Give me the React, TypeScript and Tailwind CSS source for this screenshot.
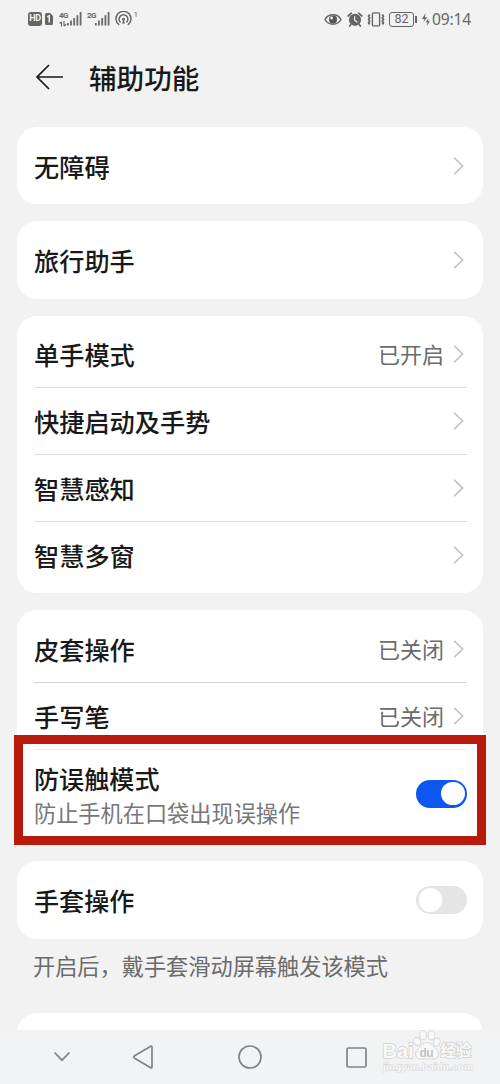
import type { ReactNode } from 'react';
import clsx from 'clsx';

function SignalBars() {
  return (
    <svg width="15" height="14" viewBox="0 0 15 14" fill="#6b6b6b">
      <rect x="0" y="11" width="1.8" height="2.5" />
      <rect x="3.1" y="8.5" width="1.8" height="5" />
      <rect x="6.3" y="6" width="1.8" height="7.5" />
      <rect x="9.5" y="3.2" width="1.8" height="10.3" />
      <rect x="12.7" y="0" width="1.8" height="13.5" />
    </svg>
  );
}

function StatusBar() {
  return (
    <div className="flex h-[38px] items-center justify-between pr-[28px] pl-[28px] text-[#666]">
      <div className="flex items-center">
        <span className="flex h-[14px] w-[14px] items-center justify-center rounded-[3px] bg-[#666] font-['Roboto'] text-[9px] font-bold tracking-[-0.4px] text-[#f2f2f2]">
          HD
        </span>
        <svg className="ml-[3px]" width="8" height="12" viewBox="0 0 8 12">
          <path d="M1.5 0H5L8 3V10.5Q8 12 6.5 12H1.5Q0 12 0 10.5V1.5Q0 0 1.5 0Z" fill="#666" />
          <path d="M2.2 3.8 4.2 2.8V9.6" stroke="#f2f2f2" strokeWidth="1.5" fill="none" />
        </svg>
        <div className="ml-[6px] flex h-[15px] w-[8px] flex-col">
          <span className="font-['Roboto'] text-[8px] leading-[7px] font-bold tracking-[-0.7px]">4G</span>
          <svg width="8" height="6" viewBox="0 0 8 6" className="mt-[2px]" fill="none" stroke="#666" strokeWidth="1.1">
            <path d="M2.5 5.5V1M0.7 2.5 2.5 0.8M5 0V5M7.2 3.2 5 5" />
          </svg>
        </div>
        <SignalBars />
        <span className="ml-[5px] h-[15px] w-[8px] font-['Roboto'] text-[8px] leading-[7px] font-bold tracking-[-0.7px]">2G</span>
        <SignalBars />
        <svg className="ml-[5px]" width="17" height="16" viewBox="0 0 17 16" fill="none" stroke="#666" strokeWidth="1.5">
          <path d="M4.2 14A7.5 7.5 0 1 1 12.8 14" />
          <path d="M5.5 11.4A4.4 4.4 0 1 1 11.5 11.4" />
          <circle cx="8.5" cy="8.2" r="1.5" fill="#666" stroke="none" />
          <path d="M8.5 9 10.2 12.6H6.8Z" fill="#666" stroke="none" />
        </svg>
        <span className="ml-[1.5px] h-[16px] font-['Roboto'] text-[8px] leading-[8px]">1</span>
      </div>

      <div className="flex items-center">
        <svg width="18" height="13" viewBox="0 0 18 13">
          <path d="M1 6.5C4.5 .2 13.5 .2 17 6.5C13.5 12.8 4.5 12.8 1 6.5Z" fill="none" stroke="#666" strokeWidth="1.5" />
          <circle cx="9" cy="6.5" r="4" fill="#555" />
          <circle cx="7.6" cy="5" r="1.4" fill="#f2f2f2" />
        </svg>
        <svg className="ml-[5px]" width="16" height="15" viewBox="0 0 16 15" fill="none" stroke="#666">
          <circle cx="8" cy="7.8" r="6.1" fill="#666" stroke="none" />
          <path d="M1.2 4 4.3 1.2M14.8 4 11.7 1.2" strokeWidth="1.7" strokeLinecap="round" />
          <path d="M4 12.3 2.5 14.2M12 12.3 13.5 14.2" strokeWidth="1.6" strokeLinecap="round" />
          <path d="M7.6 4.2V8.2L10.4 10.2" stroke="#f2f2f2" strokeWidth="1.2" />
        </svg>
        <svg className="ml-[4px]" width="18" height="15" viewBox="0 0 18 15" fill="none" stroke="#666" strokeWidth="1.4">
          <rect x="5.4" y="0.9" width="7.2" height="13" rx="1.2" />
          <path d="M2.6 2.5 1.6 4.2 2.6 5.9 1.6 7.5 2.6 9.1 1.6 10.8 2.6 12.5" strokeWidth="1.8" />
          <path d="M15.4 2.5 16.4 4.2 15.4 5.9 16.4 7.5 15.4 9.1 16.4 10.8 15.4 12.5" strokeWidth="1.8" />
        </svg>
        <span className="ml-[4px] flex h-[15px] w-[25px] items-center justify-center rounded-[3px] border border-[#666] font-['Roboto'] text-[12.5px] leading-none">
          82
        </span>
        <span className="ml-px h-[7px] w-[2px] bg-[#666]" />
        <svg className="ml-[5px]" width="8" height="13" viewBox="0 0 8 13" fill="#666">
          <path d="M3.6 0 0 6H2.5L1.3 9.6 5.2 4.3H2.9Z" />
          <path d="M6.2 5.5 3.8 9.2H5.6L4.7 12.8 8 8.2H6.2Z" />
        </svg>
        <span className="mt-[2px] ml-[2px] w-[40px] font-['Noto_Sans'] text-[15.6px] leading-none tracking-[-0.2px] whitespace-nowrap">09:14</span>
      </div>
    </div>
  );
}

function Card({ children, className }: { children?: ReactNode; className?: string }) {
  return <section className={clsx('mx-[17px] rounded-[20px] bg-white pr-[16px] pl-[17px]', className)}>{children}</section>;
}

function Chevron() {
  return (
    <svg width="11" height="20" viewBox="0 0 11 20" fill="none" stroke="#c4c4c4" strokeWidth="1.7" className="mr-[3px] -mt-[4px]">
      <path d="M1.2 1.8 9.6 10 1.2 18.2" />
    </svg>
  );
}

function Row({ label, value, className }: { label: string; value?: string; className?: string }) {
  return (
    <div className={clsx('flex items-center justify-between pt-[4px]', className)}>
      <span className="pt-[2px] text-[25.2px] leading-none font-medium">{label}</span>
      <span className="flex items-center gap-[9px] text-[22px] leading-none text-[#6b6b6b]">
        {value}
        <Chevron />
      </span>
    </div>
  );
}

function Toggle({ on = false }: { on?: boolean }) {
  return (
    <button
      role="switch"
      aria-checked={on}
      className={clsx(
        'flex h-[28px] w-[51px] items-center rounded-full px-[2.5px]',
        on ? 'justify-end bg-[#0b57f0]' : 'justify-start bg-[#e5e5e5]',
      )}
    >
      <span className="size-[23.5px] rounded-full bg-white" />
    </button>
  );
}

function NavBar() {
  return (
    <nav className="relative flex h-[54px] items-center bg-[#f2f3f4] pl-[53px]">
      <svg width="18" height="12" viewBox="0 0 18 12" fill="none" stroke="#828486" strokeWidth="1.7">
        <path d="M1.5 1.5 9 9.2 16.5 1.5" />
      </svg>
      <svg className="ml-[61px]" width="22" height="24" viewBox="0 0 22 24" fill="none" stroke="#828486" strokeWidth="1.7" strokeLinejoin="round">
        <path d="M18.7 1.3Q20 .5 20 2.1V21.9Q20 23.5 18.7 22.7L2.2 12.9Q1 12 2.2 11.1Z" />
      </svg>
      <svg className="ml-[84px]" width="24" height="24" viewBox="0 0 24 24" fill="none" stroke="#828486" strokeWidth="1.7">
        <circle cx="12" cy="12" r="11" />
      </svg>
      <svg className="ml-[84px]" width="21" height="21" viewBox="0 0 21 21" fill="none" stroke="#828486" strokeWidth="1.7">
        <rect x="1" y="1" width="19" height="19" rx="1.5" />
      </svg>
      <Watermark />
    </nav>
  );
}

function Watermark() {
  return (
    <svg className="absolute top-0 left-[381px]" width="100" height="46" viewBox="0 0 100 46">
      <g fill="#f9f9f9" stroke="#d2d2d2" strokeWidth="0.9">
        <ellipse cx="36.2" cy="11.5" rx="3.3" ry="4.2" transform="rotate(-18 36.2 11.5)" />
        <ellipse cx="42" cy="5.2" rx="3.3" ry="4.6" />
        <ellipse cx="50.4" cy="5.4" rx="3.3" ry="4.6" />
        <ellipse cx="55.8" cy="12.2" rx="3.3" ry="4.2" transform="rotate(18 55.8 12.2)" />
        <path d="M46 12.5C50.5 12.5 51.5 16 55 19C59.5 23 58 29 52.5 29C48.5 29 44 28.5 40.5 29C34.5 29.5 32.5 23 37 19C41 16 41.5 12.5 46 12.5Z" />
      </g>
      <g fill="#f9f9f9" stroke="#d0d0d0" strokeWidth="1.4" paintOrder="stroke" fontWeight="bold">
        <text x="1.5" y="27.5" fontSize="19.5" textLength="31" lengthAdjust="spacingAndGlyphs" fontFamily="Liberation Sans, sans-serif">Bai</text>
        <text x="59.5" y="25.5" fontSize="15.5" textLength="31" fontFamily="Noto Sans CJK SC, sans-serif">经验</text>
        <text x="2" y="39.5" fontSize="8.8" textLength="90" lengthAdjust="spacingAndGlyphs" strokeWidth="0.8" fontFamily="Liberation Sans, sans-serif">jingyan.baidu.com</text>
      </g>
      <text x="38.5" y="26.5" fontSize="12" fontWeight="bold" textLength="14" fill="#c2c2c2" fontFamily="Liberation Sans, sans-serif">du</text>
    </svg>
  );
}

export default function App() {
  return (
    <main className="relative flex h-[1084px] w-[500px] flex-col overflow-hidden bg-[#f2f2f3] font-['Liberation_Sans','Noto_Sans_CJK_SC',sans-serif] text-[#191919]">
      <StatusBar />
      <header className="flex h-[79px] items-center pl-[35px]">
        <svg className="-mt-[2px]" width="29" height="26" viewBox="0 0 29 26" fill="none" stroke="#191919" strokeWidth="1.7">
          <path d="M28 13H2M14 1 2 13 14 25" />
        </svg>
        <h1 className="ml-[25px] pt-[4px] text-[27.6px] leading-none font-medium">辅助功能</h1>
      </header>

      <Card className="mt-[10px]">
        <Row label="无障碍" className="h-[77px]" />
      </Card>
      <Card className="mt-[17px]">
        <Row label="旅行助手" className="h-[78px]" />
      </Card>

      <Card className="mt-[17px] py-[5px]">
        <Row label="单手模式" value="已开启" className="h-[67px] border-b border-[#dedede]" />
        <Row label="快捷启动及手势" className="h-[67px] border-b border-[#dedede]" />
        <Row label="智慧感知" className="h-[67px] border-b border-[#dedede]" />
        <Row label="智慧多窗" className="h-[66px]" />
      </Card>

      <Card className="mt-[17px] py-[5px]">
        <Row label="皮套操作" value="已关闭" className="h-[68px] border-b border-[#d4d4d4]" />
        <Row label="手写笔" value="已关闭" className="h-[67px] border-b border-[#eee]" />
        <div className="flex h-[89px] items-center justify-between">
          <div className="flex flex-col gap-[11px] pt-[5px]">
            <span className="text-[25.1px] leading-none font-medium">防误触模式</span>
            <span className="text-[22.2px] leading-none text-[#777]">防止手机在口袋出现误操作</span>
          </div>
          <div className="pb-[2px]">
            <Toggle on />
          </div>
        </div>
      </Card>

      <Card className="mt-[17px]">
        <div className="flex h-[78px] items-center justify-between">
          <span className="pt-[5px] text-[25.1px] leading-none font-medium">手套操作</span>
          <Toggle />
        </div>
      </Card>
      <p className="mt-[18px] ml-[33px] text-[22.2px] leading-none text-[#6b6b6b]">开启后，戴手套滑动屏幕触发该模式</p>

      <div className="mt-auto h-[17px] overflow-hidden">
        <Card className="h-[78px]" />
      </div>
      <NavBar />

      {/* highlight around the mistouch prevention row */}
      <div className="absolute top-[735px] left-[14px] h-[110px] w-[472px] border-[9px] border-[#b81a0c]" />
    </main>
  );
}
